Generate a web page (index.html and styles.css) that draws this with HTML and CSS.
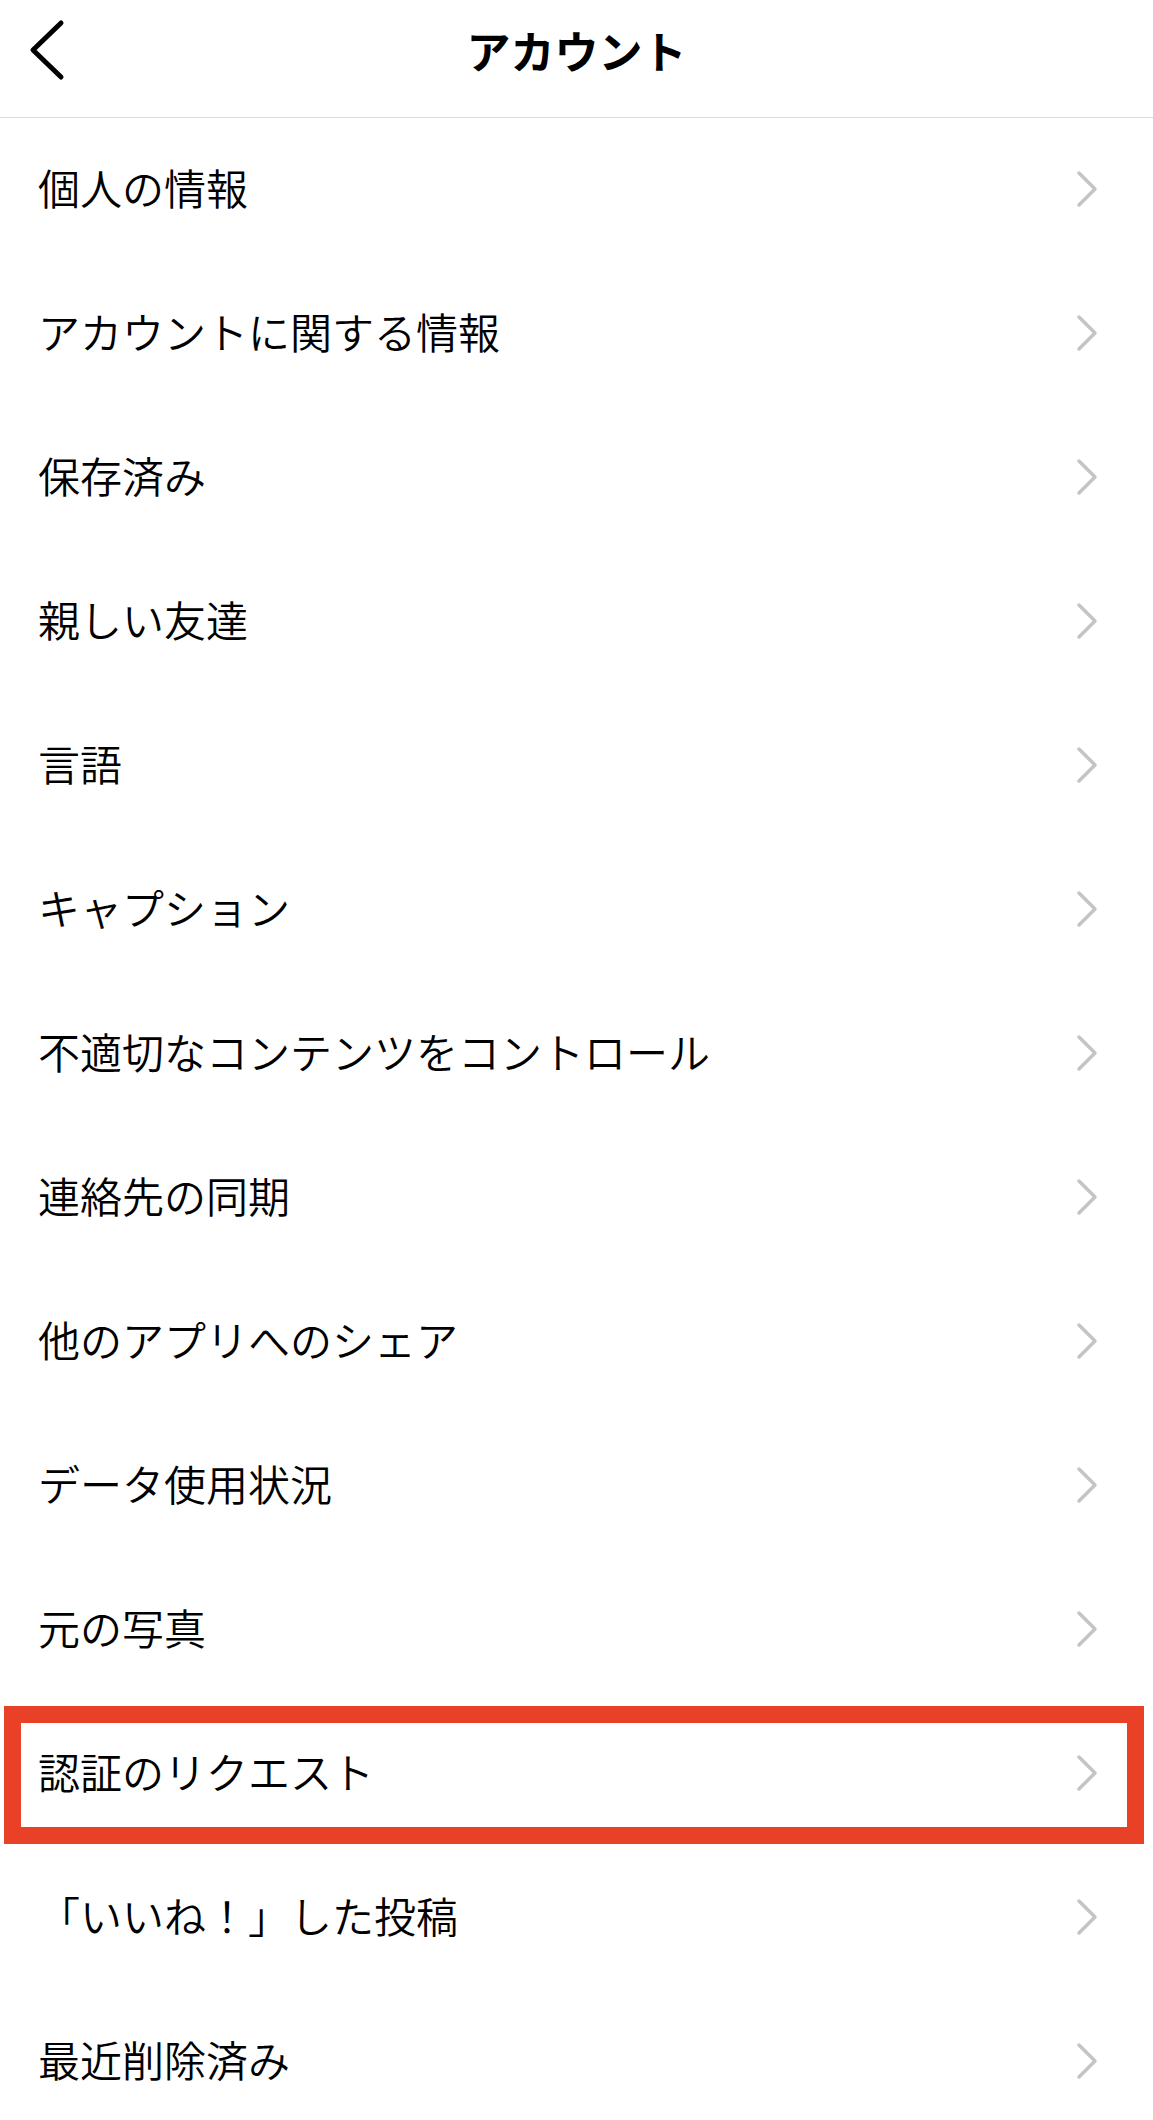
FILE: index.html
```html
<!DOCTYPE html>
<html lang="ja">
<head>
  <meta charset="UTF-8" />
  <meta name="viewport" content="width=device-width, initial-scale=1.0"/>
  <title>アカウント</title>
  <link rel="stylesheet" href="styles.css">
</head>
<body>

  <header class="topbar">
    <button class="back" aria-label="戻る">
      <svg width="38" height="62" viewBox="0 0 38 62">
        <polyline points="33,4 5,31 33,58" fill="none" stroke="#000" stroke-width="5" stroke-linecap="round" stroke-linejoin="round"/>
      </svg>
    </button>
    <h1>アカウント</h1>
    <span class="spacer"></span>
  </header>

  <ul class="menu">
    <li class="row"><span>個人の情報</span><i class="chev"></i></li>
    <li class="row"><span>アカウントに関する情報</span><i class="chev"></i></li>
    <li class="row"><span>保存済み</span><i class="chev"></i></li>
    <li class="row"><span>親しい友達</span><i class="chev"></i></li>
    <li class="row"><span>言語</span><i class="chev"></i></li>
    <li class="row"><span>キャプション</span><i class="chev"></i></li>
    <li class="row"><span>不適切なコンテンツをコントロール</span><i class="chev"></i></li>
    <li class="row"><span>連絡先の同期</span><i class="chev"></i></li>
    <li class="row"><span>他のアプリへのシェア</span><i class="chev"></i></li>
    <li class="row"><span>データ使用状況</span><i class="chev"></i></li>
    <li class="row"><span>元の写真</span><i class="chev"></i></li>
    <li class="row marked"><span>認証のリクエスト</span><i class="chev"></i></li>
    <li class="row"><span>「いいね！」した投稿</span><i class="chev"></i></li>
    <li class="row"><span>最近削除済み</span><i class="chev"></i></li>
  </ul>

</body>
</html>
```

FILE: styles.css
```css
* { box-sizing: border-box; }
body {
  margin: 0;
  background: #fff;
  color: #000;
  font-family: "Noto Sans CJK JP", "Noto Sans", sans-serif;
}

.topbar {
  height: 118px;
  display: grid;
  grid-template-columns: 120px 1fr 120px;
  align-items: center;
  padding-bottom: 18px;
  border-bottom: 1px solid #dbdbdb;
}
.back {
  background: none;
  border: none;
  padding: 0 0 0 28px;
  text-align: left;
  cursor: pointer;
  line-height: 0;
}
.topbar h1 {
  margin: 0;
  text-align: center;
  font-size: 44px;
  font-weight: 700;
  line-height: 1;
}

.menu {
  list-style: none;
  margin: 0;
  padding: 0;
}
.row {
  position: relative;
  height: 144px;
  display: flex;
  align-items: center;
  justify-content: space-between;
  padding: 0 55px 0 38px;
  font-size: 42px;
  font-weight: 350;
  line-height: 1;
}
.row span { margin-bottom: 6px; }
.chev {
  width: 22px;
  height: 38px;
  margin-bottom: 2px;
  background: url("data:image/svg+xml;utf8,<svg xmlns='http://www.w3.org/2000/svg' width='22' height='38' viewBox='0 0 22 38'><polyline points='3,3 19,19 3,35' fill='none' stroke='%23c4c4c4' stroke-width='3.5' stroke-linecap='round' stroke-linejoin='round'/></svg>") no-repeat center;
}

/* red highlight frame drawn over the row */
.marked::after {
  content: "";
  position: absolute;
  top: 4px;
  bottom: 2px;
  left: 4px;
  right: 9px;
  border: 17px solid #e84127;
  pointer-events: none;
}
```
